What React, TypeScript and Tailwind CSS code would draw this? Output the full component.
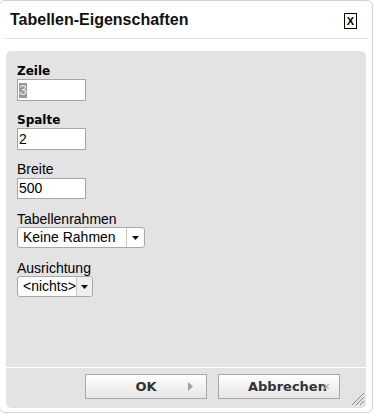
import React from "react";

const Arrow = () => (
  <svg width="7" height="4" viewBox="0 0 7 4" className="block">
    <path d="M0 0 H7 L3.5 4 Z" fill="#111" />
  </svg>
);

export default function App() {
  return (
    <div className="w-[374px] h-[415px] bg-white overflow-hidden font-['Liberation_Sans',Arial,sans-serif] text-black">
      <div className="-ml-px w-[374px] h-[413px] border border-[#d2d2d2] rounded-[6px] flex flex-col bg-white">
        {/* header */}
        <div className="ml-[5px] mr-[4px] h-[38px] border-b border-[#e2e2e2] flex items-start justify-between">
          <div className="pl-[5px] pt-[9px] text-[16px] leading-[20px] font-bold text-[#111]">
            Tabellen-Eigenschaften
          </div>
          <div className="mt-[12px] mr-[11px] w-[13px] h-[16px] border border-black flex items-center justify-center text-[11px] leading-none font-bold text-black">
            X
          </div>
        </div>
        {/* panel */}
        <div className="relative mt-[12px] ml-[6px] mr-[6px] mb-[4px] flex-1 bg-[#e3e3e3] rounded-[5px] flex flex-col">
          <div className="flex-1 pl-[11px] pt-[13px] flex flex-col">
            <div className="text-[12px] leading-[15px] font-bold font-['DejaVu_Sans',Verdana,sans-serif]">Zeile</div>
            <div className="w-[69px] h-[22px] border border-[#a6a6a6] bg-white pl-px flex items-center text-[14px]">
              <span className="bg-[#999] text-[#e6e6e6] leading-[15px]">3</span>
            </div>

            <div className="mt-[12px] text-[12px] leading-[15px] font-bold font-['DejaVu_Sans',Verdana,sans-serif]">Spalte</div>
            <div className="w-[69px] h-[22px] border border-[#a6a6a6] bg-white pl-px flex items-center text-[14px]">2</div>

            <div className="mt-[11px] text-[14px] leading-[16px]">Breite</div>
            <div className="mt-[1px] w-[69px] h-[21px] border border-[#a6a6a6] bg-white pl-px flex items-center text-[14px]">500</div>

            <div className="mt-[12px] text-[14px] leading-[16px]">Tabellenrahmen</div>
            <div className="w-[128px] h-[21px] border border-[#a9a9a9] rounded-[3px] bg-white flex items-stretch text-[14px]">
              <div className="flex-1 pl-[5px] flex items-center">Keine Rahmen</div>
              <div className="w-[18px] border-l border-[#c8c8c8] flex items-center justify-center">
                <Arrow />
              </div>
            </div>

            <div className="mt-[12px] text-[14px] leading-[16px]">Ausrichtung</div>
            <div className="w-[76px] h-[21px] border border-[#a9a9a9] rounded-[3px] bg-white flex items-stretch text-[14px]">
              <div className="w-[58px] pl-[5px] flex items-center whitespace-nowrap">&lt;nichts&gt;</div>
              <div className="w-[16px] border-l border-[#c8c8c8] bg-[#f0f0f0] rounded-r-[3px] flex items-center justify-center">
                <Arrow />
              </div>
            </div>
          </div>
          {/* footer */}
          <div className="h-[41px] border-t border-white flex justify-end items-start pt-[6px] pr-[26px] gap-[11px]">
            <div className="relative w-[122px] h-[25px] border border-[#a8a8a8] bg-gradient-to-b from-white to-[#e6e6e6] flex items-center justify-center font-['DejaVu_Sans',Verdana,sans-serif] font-bold text-[13px] text-[#333]">
              OK
              <svg width="5" height="9" viewBox="0 0 5 9" className="absolute left-[102px] top-[7px]">
                <path d="M0 0 L5 4.5 L0 9 Z" fill="#b0a090" />
              </svg>
            </div>
            <div className="relative w-[122px] h-[25px] border border-[#a8a8a8] bg-gradient-to-b from-white to-[#e6e6e6] flex items-center pl-[29px] font-['DejaVu_Sans',Verdana,sans-serif] font-bold text-[13px] text-[#333]">
              Abbrechen
              <svg width="7" height="7" viewBox="0 0 7 7" className="absolute left-[104px] top-[8px]">
                <path d="M1 1 L6 6 M6 1 L1 6" stroke="#b8b8b8" strokeWidth="1.4" />
              </svg>
            </div>
          </div>
          <svg width="14" height="14" viewBox="0 0 14 14" className="absolute right-[1px] bottom-[2px]">
            <path d="M13 1 L1 13 M13 5 L5 13 M13 9 L9 13" stroke="#8a8a8a" strokeWidth="1" />
          </svg>
        </div>
      </div>
    </div>
  );
}
